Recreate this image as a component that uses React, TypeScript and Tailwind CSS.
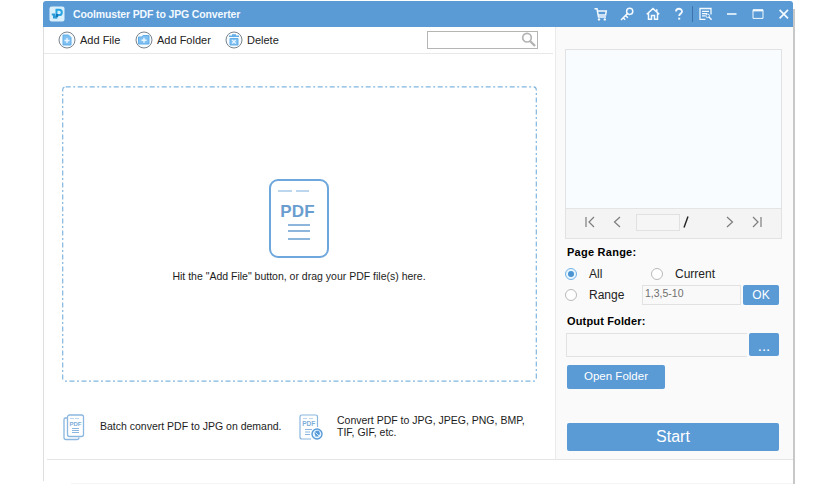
import type { ReactNode } from "react";

function Glyph({ w, h, children, className = "" }: { w: number; h: number; children: ReactNode; className?: string }) {
  return (
    <svg width={w} height={h} viewBox={`0 0 ${w} ${h}`} fill="none" className={`block shrink-0 ${className}`}>
      {children}
    </svg>
  );
}

function TitleBar() {
  return (
    <header className="flex h-[26px] shrink-0 items-center rounded-t-[3px] bg-[#5a9ad5] pl-[6px] text-[#f2f9ff]">
      <Glyph w={16} h={16}>
        <rect x="0.5" y="0.5" width="15" height="15" rx="2" fill="#d9effb" />
        <path d="M7.5 12.500V3.800h2.700a2.600 2.600 0 0 1 0 5.200H8" stroke="#27a5e4" strokeWidth="2" />
        <path d="M2.800 7.500h3.400v2H2.800zM4 9.500h3.500v3H4z" fill="#2b9bd8" />
        <path d="M7 8h2.200v3H7z" fill="#1675b8" />
      </Glyph>
      <h1 className="ml-[8px] w-[521px] whitespace-nowrap text-[10.5px] font-bold leading-none tracking-[-0.14px]">
        Coolmuster PDF to JPG Converter
      </h1>
      <Glyph w={14} h={14}>
        <path d="M0.5 1.800h2.500l1.500 8.200h7.500M3 4h9.300l-.7 4H4.200" stroke="currentColor" strokeWidth="1.500" />
        <circle cx="5" cy="12.400" r="1.200" fill="currentColor" />
        <circle cx="10.800" cy="12.400" r="1.200" fill="currentColor" />
      </Glyph>
      <Glyph w={14} h={14} className="ml-[12px]">
        <circle cx="9.700" cy="4.300" r="3.100" stroke="currentColor" strokeWidth="1.500" />
        <path d="M7.400 6.600 1 13M5.600 8.500l2.300 2.300M3.200 10.800l2 2" stroke="currentColor" strokeWidth="1.500" />
      </Glyph>
      <Glyph w={14} h={14} className="ml-[12px]">
        <path d="M0.700 7.300 7 1.600l6.300 5.700M2.500 6.200v6.100h3V8.500h3v3.800h3V6.200M10.800 4.700V2.200" stroke="currentColor" strokeWidth="1.500" />
      </Glyph>
      <Glyph w={14} h={14} className="ml-[12px]">
        <path d="M4 4.500C4 .8 10 .9 10 4.400c0 2.100-2.800 2.200-2.800 4.700" stroke="currentColor" strokeWidth="1.800" />
        <path d="M6.200 10.700h2v1.900h-2z" fill="currentColor" />
      </Glyph>
      <span className="ml-[6px] h-[16px] w-px bg-[#3d73a8]" />
      <Glyph w={14} h={14} className="ml-[6px]">
        <path d="M6.500 12.400H1V1.500h11v6M3 4.300h7M3 6.600h5M3 8.900h3" stroke="currentColor" strokeWidth="1.300" />
        <circle cx="8.600" cy="8.800" r="1.800" stroke="currentColor" />
        <path d="m10 10 2.600 2.800" stroke="currentColor" strokeWidth="1.400" />
      </Glyph>
      <Glyph w={12} h={12} className="ml-[13px]">
        <path d="M1 6h9.500" stroke="currentColor" strokeWidth="1.600" />
      </Glyph>
      <Glyph w={12} h={12} className="ml-[14px]">
        <path d="M1 1.800h10v8.600H1z" stroke="currentColor" />
        <path d="M1 2.400h10" stroke="currentColor" strokeWidth="2" />
      </Glyph>
      <Glyph w={12} h={12} className="ml-[14px]">
        <path d="m1.600 1.800 8.400 8.600m0-8.600L1.600 10.400" stroke="currentColor" strokeWidth="1.700" />
      </Glyph>
    </header>
  );
}

function Tool({ label, children, className }: { label: string; children: ReactNode; className: string }) {
  return (
    <button className={`flex items-center gap-[4px] whitespace-nowrap text-left text-[11px] leading-none text-[#222] ${className}`}>
      <Glyph w={18} h={18}>
        <circle cx="9" cy="9" r="8" fill="#f6fbff" stroke="#7b838b" />
        {children}
      </Glyph>
      {label}
    </button>
  );
}

function Toolbar() {
  return (
    <div className="mr-[2px] flex h-[27px] shrink-0 items-center border-b border-[#e8e8e8] pl-[14px]">
      <Tool label="Add File" className="w-[77px]">
        <path d="M5 4h5.500L13 6.500V14H5z" fill="#7fc0f2" stroke="#63ade8" />
        <path d="M9 7v5M6.500 9.500h5" stroke="#eaf6ff" strokeWidth="1.400" />
      </Tool>
      <Tool label="Add Folder" className="w-[90px]">
        <path d="M3.500 6H7l1-1.500h6V13H3.500z" fill="#7fc0f2" stroke="#63ade8" />
        <path d="M9 6.800v5M6.500 9.300h5" stroke="#eaf6ff" strokeWidth="1.400" />
      </Tool>
      <Tool label="Delete" className="w-[202px]">
        <path d="M4 5.300h10M7 4h4" stroke="#63ade8" strokeWidth="1.500" />
        <path d="M5 7.500h8V14H5z" fill="#7fc0f2" stroke="#63ade8" />
        <path d="m7.200 9 3.500 3.500m0-3.500-3.500 3.500" stroke="#eaf6ff" strokeWidth="1.200" />
      </Tool>
      <div className="mb-[1px] flex h-[18px] w-[111px] items-start justify-end border border-[#b5b5b5] bg-white">
        <Glyph w={16} h={16}>
          <circle cx="6" cy="5.700" r="4.300" stroke="#b4b4b4" strokeWidth="1.700" />
          <path d="m9 9 5 5" stroke="#b4b4b4" strokeWidth="2.400" />
        </Glyph>
      </div>
    </div>
  );
}

function PdfPage() {
  return (
    <div className="flex h-[79px] w-[60px] flex-col items-center rounded-[9px] border-2 border-[#6ea7dc] text-[#6a9dcf]">
      <div className="ml-[7px] mt-[9px] flex w-[32px] gap-[4px] self-start">
        <span className="h-[2px] w-[14px] shrink-0 bg-[#bcd6ee]" />
        <span className="h-[2px] w-[13px] shrink-0 bg-[#bcd6ee]" />
      </div>
      <span className="mr-[2px] mt-[10px] text-[17px] font-bold leading-[19px] tracking-[0.2px]">PDF</span>
      <Glyph w={22} h={18} className="mr-[0px] mt-[1px]">
        <path d="M0 3h22M0 9h22M0 17h22" stroke="#6a9dcf" strokeWidth="1.700" />
      </Glyph>
    </div>
  );
}

function DropZone() {
  return (
    <div className="relative ml-[18px] mt-[32px] flex h-[296px] w-[475px] shrink-0 flex-col items-center pr-[2px] pt-[93px]">
      <svg width="475" height="296" fill="none" className="absolute inset-0">
        <rect x="0.7" y="0.8" width="473.6" height="294.4" rx="3" stroke="#80b5de" strokeWidth="1.2" strokeDasharray="5 2.5 2 2.5" />
      </svg>
      <PdfPage />
      <p className="ml-[1px] mt-[12px] whitespace-nowrap text-[10.5px] leading-[13px] text-[#1c1c1c]">
        Hit the "Add File" button, or drag your PDF file(s) here.
      </p>
    </div>
  );
}

function Features() {
  return (
    <div className="mt-[30px] flex h-[30px] shrink-0 items-center pl-[19px] text-[10.5px] leading-[12px] text-[#1c1c1c]">
      <Glyph w={22} h={27}>
        <path d="M4 4H2.500C1.400 4 1 4.600 1 5.500v18c0 1.300.6 2 2 2h11c1.500 0 2-.7 2-2" stroke="#8ab6df" strokeWidth="1.300" />
        <rect x="4.500" y="1" width="16" height="21.500" rx="2" stroke="#8ab6df" strokeWidth="1.300" />
        <path d="M7 4.500h4m1 0h4" stroke="#bdd7ee" />
        <text x="6.500" y="12" fontSize="6" fontWeight="700" fill="#7badd9">PDF</text>
        <path d="M9 14.500h7m-7 2h7m-7 2h7" stroke="#8ab6df" />
      </Glyph>
      <p className="mb-[2px] ml-[15px] w-[199px] whitespace-nowrap">Batch convert PDF to JPG on demand.</p>
      <Glyph w={25} h={27}>
        <path d="M18.500 13V3c0-1.300-.7-2-2-2H3C1.700 1 1 1.700 1 3v20c0 1.300.7 2 2 2h9" stroke="#8ab6df" strokeWidth="1.200" />
        <path d="M4 4.500h4m2 0h4" stroke="#bdd7ee" />
        <text x="3.200" y="12" fontSize="6.500" fontWeight="700" fill="#7badd9">PDF</text>
        <path d="M6 15.500h7m-7 2.500h5m-5 2.500h5" stroke="#8ab6df" />
        <circle cx="18" cy="20" r="5" fill="#e9f5ff" stroke="#579bd8" strokeWidth="1.400" />
        <path d="m15.500 18.500 1.500-1.700h3l1 2.700-1.500 3h-3z" fill="#579bd8" />
        <path d="m16.500 18.500 3.500 3.500" stroke="#d6ebfc" />
      </Glyph>
      <p className="mb-[2px] ml-[13px] whitespace-nowrap">
        Convert PDF to JPG, JPEG, PNG, BMP,
        <br />
        TIF, GIF, etc.
      </p>
    </div>
  );
}

function Preview() {
  return (
    <div className="flex h-[190px] w-[217px] flex-col border border-[#e0e2e4] bg-[#f8fcff]">
      <div className="flex-1" />
      <div className="flex h-[30px] items-center border-t border-[#e4e4e4] bg-[#f4f4f4] pb-[3px] pl-[19px] text-[#7d7d7d]">
        <Glyph w={10} h={12}>
          <path d="M1 1v10M9 1 4 6l5 5" stroke="currentColor" strokeWidth="1.200" />
        </Glyph>
        <Glyph w={8} h={12} className="ml-[18px]">
          <path d="M7 1 1.500 6 7 11" stroke="currentColor" strokeWidth="1.200" />
        </Glyph>
        <div className="ml-[15px] h-[17px] w-[44px] border border-[#e1e1e1] bg-[#f6f6f6]" />
        <Glyph w={6} h={12} className="ml-[3px]">
          <path d="M1 11.500 5 0.500" stroke="#222" strokeWidth="1.400" />
        </Glyph>
        <Glyph w={8} h={12} className="ml-[37px]">
          <path d="M1 1l5.500 5L1 11" stroke="currentColor" strokeWidth="1.200" />
        </Glyph>
        <Glyph w={10} h={12} className="ml-[18px]">
          <path d="M9 1v10M1 1l5 5-5 5" stroke="currentColor" strokeWidth="1.200" />
        </Glyph>
      </div>
    </div>
  );
}

function Radio({ checked = false }: { checked?: boolean }) {
  return (
    <span
      className={
        checked
          ? "flex h-[12px] w-[12px] shrink-0 items-center justify-center rounded-full border border-[#72b3e8] bg-[#e9f5ff]"
          : "h-[12px] w-[12px] shrink-0 rounded-full border border-[#b9b9b9] bg-white"
      }
    >
      {checked && <span className="h-[6px] w-[6px] rounded-full bg-[#4a94d4]" />}
    </span>
  );
}

function SidePanel() {
  return (
    <aside className="flex w-[238px] shrink-0 flex-col border-l border-[#eaeaea] bg-[#fafafa] pl-[9px] pt-[22px] text-[#222]">
      <Preview />
      <h2 className="ml-[2px] mt-[6px] text-[11px] font-bold leading-[14px] tracking-[0.25px] text-black">Page Range:</h2>
      <div className="mt-[8px] flex h-[14px] items-center text-[12px] leading-none">
        <Radio checked />
        <span className="ml-[12px] w-[62px]">All</span>
        <Radio />
        <span className="ml-[12px]">Current</span>
      </div>
      <div className="mt-[4px] flex h-[20px] items-center text-[12px] leading-none">
        <Radio />
        <span className="ml-[12px] w-[53px]">Range</span>
        <div className="flex h-[20px] w-[99px] items-center border border-[#e2e2e2] bg-[#f9f9f9] pb-[3px] pl-[2px] text-[10.5px] text-[#707070]">1,3,5-10</div>
        <button className="ml-[2px] h-[20px] w-[36px] rounded-[2px] bg-[#5a9ad5] text-[12px] leading-none text-white">OK</button>
      </div>
      <h2 className="ml-[2px] mt-[9px] text-[11px] font-bold leading-[14px] tracking-[0.15px] text-black">Output Folder:</h2>
      <div className="ml-[1px] mt-[5px] flex h-[24px] items-start">
        <div className="h-[24px] w-[181px] border border-r-0 border-[#e2e2e2] bg-[#f9f9f9]" />
        <button className="ml-[2px] h-[23px] w-[30px] rounded-[2px] bg-[#5a9ad5] pt-[2px] text-[15px] leading-none text-white">...</button>
      </div>
      <button className="ml-[2px] mt-[8px] h-[24px] w-[98px] rounded-[2px] bg-[#5a9ad5] text-[11.5px] leading-none text-white">Open Folder</button>
      <button className="ml-[2px] mt-[34px] h-[28px] w-[212px] rounded-[2px] bg-[#5a9ad5] text-[16px] leading-none text-white">Start</button>
    </aside>
  );
}

export default function App() {
  return (
    <main className="h-[484px] w-[836px] overflow-hidden bg-white pl-[43px] pt-[1px] font-['Liberation_Sans',Arial,sans-serif]">
      <div className="flex">
        <section className="flex h-[483px] w-[750px] flex-col">
          <TitleBar />
          <div className="flex h-[432px] shrink-0">
            <div className="flex w-[512px] shrink-0 flex-col border-l border-[#dedede]">
              <Toolbar />
              <DropZone />
              <Features />
            </div>
            <SidePanel />
          </div>
          <div className="h-[22px] shrink-0 border-l border-[#dedede] pl-[3px]">
            <div className="h-px bg-[#e5e5e5]" />
          </div>
          <div className="ml-[28px] mt-[2px] h-px bg-[#f4f4f4]" />
        </section>
        <div className="mt-[8px] h-[475px] w-[2px] bg-[#c8c8c8]" />
      </div>
    </main>
  );
}
